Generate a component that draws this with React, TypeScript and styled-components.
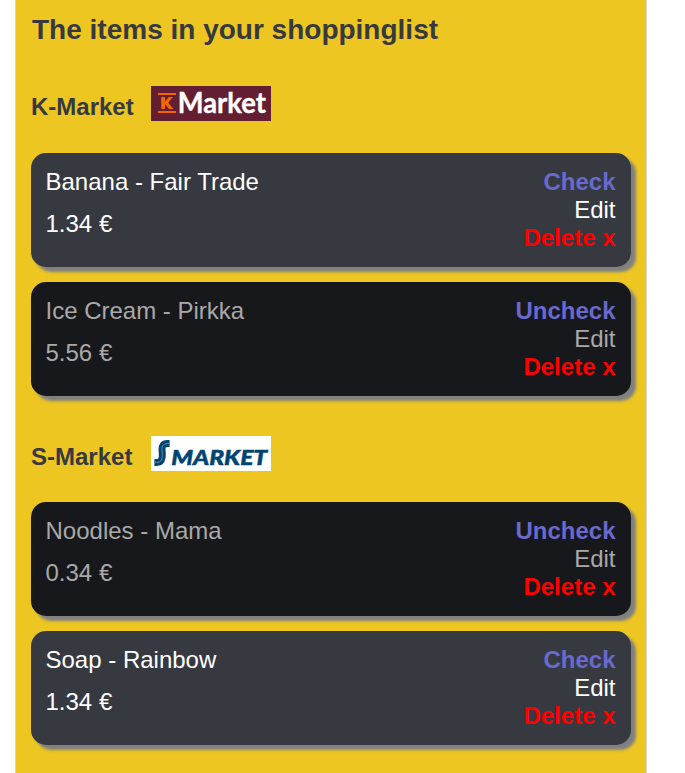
import React from "react";
import styled, { createGlobalStyle } from "styled-components";

const GlobalStyle = createGlobalStyle`
  * { box-sizing: border-box; }
  body {
    margin: 0;
    background: #ffffff;
    font-family: "Liberation Sans", Arial, sans-serif;
    font-size: 24px;
    line-height: 28px;
    overflow: hidden;
  }
`;

const Panel = styled.main`
  width: 632px;
  height: 773px;
  margin-left: 15px;
  padding: 0 15px;
  background: #edc622;
  border: solid #d9d9d9;
  border-width: 0 1px;
  color: #373940;
`;

const Title = styled.h1`
  margin: 0;
  padding: 14px 0 0 1px;
  font-size: 28px;
  line-height: 32px;
`;

const Section = styled.section`
  padding-top: 40px;
`;

const StoreHeader = styled.header`
  display: flex;
  height: 35px;
`;

const StoreName = styled.h2`
  width: 120px;
  margin: 0;
  padding-top: 7px;
  font-size: 24px;
  line-height: 28px;
`;

const Logo = styled.svg`
  display: block;
  width: 120px;
  height: 35px;
`;

const ItemList = styled.ul`
  display: flex;
  flex-direction: column;
  gap: 15px;
  margin: 0;
  padding: 0;
  list-style: none;
`;

const Card = styled.li<{ $checked: boolean }>`
  display: flex;
  justify-content: space-between;
  width: 600px;
  height: 114px;
  padding: 15px 15.5px 15px 14.5px;
  border-radius: 15px;
  background: ${(p) => (p.$checked ? "#17181b" : "#373940")};
  color: ${(p) => (p.$checked ? "#a9a9a9" : "#ffffff")};
  box-shadow: 5px 5px 3px #808080;
`;

const Details = styled.div`
  display: flex;
  flex-direction: column;
  gap: 14px;
`;

const Actions = styled.div`
  display: flex;
  flex-direction: column;
  align-items: flex-end;
`;

const Action = styled.button<{ $color?: string }>`
  padding: 0;
  border: 0;
  background: none;
  font: inherit;
  font-weight: ${(p) => (p.$color ? "bold" : "normal")};
  color: ${(p) => p.$color ?? "inherit"};
  cursor: pointer;
`;

const KMarketLogo = () => (
  <Logo viewBox="0 0 120 35" role="img" aria-label="K-Market">
    <rect width="120" height="35" fill="#641e32" />
    <path d="M7 8H25M7 26H25" stroke="#f56300" strokeWidth="2.2" />
    <path
      d="M10.2 11H14V15.6L17.8 11H22L17.2 16.8L22.5 23.1H18L14 18.3V23.1H10.2Z"
      fill="#f56300"
    />
    <text
      x="26.8"
      y="27"
      fill="#ffffff"
      stroke="#ffffff"
      strokeWidth="0.4"
      fontFamily="Lato, sans-serif"
      fontWeight="700"
      fontSize="27.8"
      textLength="88"
      lengthAdjust="spacingAndGlyphs"
    >
      Market
    </text>
  </Logo>
);

const SMarketLogo = () => (
  <Logo viewBox="0 0 120 35" role="img" aria-label="S-Market">
    <rect width="120" height="35" fill="#ffffff" />
    <path
      d="M18.6 7.6H16.4C12 7.6 10.8 10.4 11 13.4L11.3 18C11.6 23.4 10.2 26.4 5.8 26.4H3.4"
      fill="none"
      stroke="#004572"
      strokeWidth="7"
    />
    <path
      d="M18.6 7.6H16.4C12 7.6 10.8 10.4 11 13.4L11.3 18C11.6 23.4 10.2 26.4 5.8 26.4H3.4"
      fill="none"
      stroke="#6f91ab"
      strokeWidth="0.9"
    />
    <text
      x="20.2"
      y="28.6"
      fill="#004572"
      stroke="#004572"
      strokeWidth="0.5"
      fontFamily="Lato, sans-serif"
      fontWeight="900"
      fontStyle="italic"
      fontSize="21.5"
      textLength="96"
      lengthAdjust="spacingAndGlyphs"
    >
      MARKET
    </text>
  </Logo>
);

interface Item {
  name: string;
  price: string;
  checked: boolean;
}

const ItemCard = ({ item }: { item: Item }) => (
  <Card $checked={item.checked}>
    <Details>
      <span>{item.name}</span>
      <span>{item.price} €</span>
    </Details>
    <Actions>
      <Action $color="#6a69cf">{item.checked ? "Uncheck" : "Check"}</Action>
      <Action>Edit</Action>
      <Action $color="#ff0000">Delete x</Action>
    </Actions>
  </Card>
);

const StoreBody = styled.div<{ $gap: number }>`
  display: flex;
  flex-direction: column;
  gap: ${(p) => p.$gap}px;
`;

const stores = [
  {
    name: "K-Market",
    logo: <KMarketLogo />,
    gap: 32,
    items: [
      { name: "Banana - Fair Trade", price: "1.34", checked: false },
      { name: "Ice Cream - Pirkka", price: "5.56", checked: true },
    ],
  },
  {
    name: "S-Market",
    logo: <SMarketLogo />,
    gap: 31,
    items: [
      { name: "Noodles - Mama", price: "0.34", checked: true },
      { name: "Soap - Rainbow", price: "1.34", checked: false },
    ],
  },
];

export default function App() {
  return (
    <>
      <GlobalStyle />
      <Panel>
        <Title>The items in your shoppinglist</Title>
        {stores.map((store) => (
          <Section key={store.name}>
            <StoreBody $gap={store.gap}>
              <StoreHeader>
                <StoreName>{store.name}</StoreName>
                {store.logo}
              </StoreHeader>
              <ItemList>
                {store.items.map((item) => (
                  <ItemCard key={item.name} item={item} />
                ))}
              </ItemList>
            </StoreBody>
          </Section>
        ))}
      </Panel>
    </>
  );
}
